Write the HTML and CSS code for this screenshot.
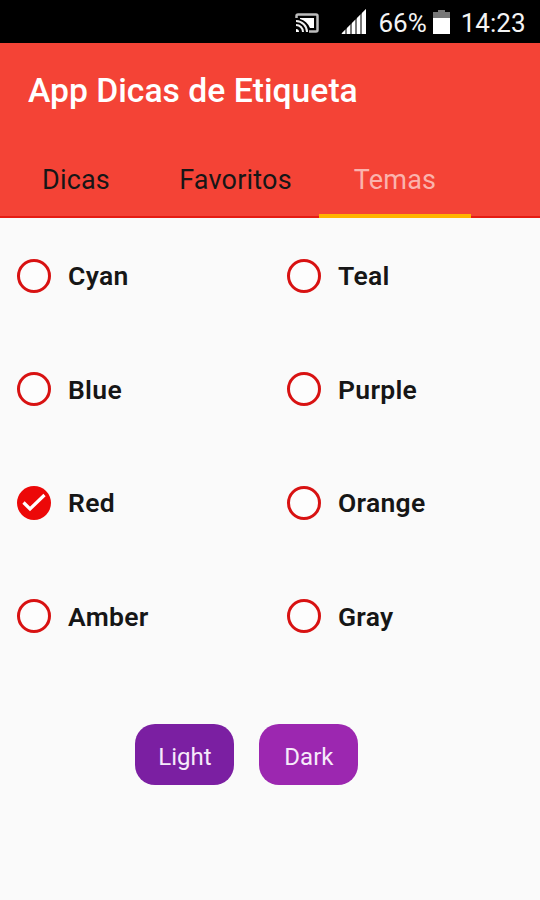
FILE: index.html
```html
<!DOCTYPE html>
<html lang="pt-BR">
<head>
<meta charset="utf-8">
<title>App Dicas de Etiqueta</title>
<link rel="stylesheet" href="styles.css">
</head>
<body>
<div class="status">
  <svg class="cast" width="24" height="20" viewBox="0 0 24 20" fill="none" stroke="#bdbdbd" stroke-width="2.500"><path d="M1.500 5V3q0-1.500 1.500-1.500h18q1.500 0 1.500 1.500v14q0 1.500-1.500 1.500h-7"/><path d="M5 5h14v10h-4Q12 8 5 6z" fill="#fff" stroke="none"/><path d="M1 8a11 11 0 0 1 11 11M1 12a7 7 0 0 1 7 7" stroke="#eee" stroke-width="2"/><path d="M1 16a3 3 0 0 1 3 3H1z" fill="#fff" stroke="none"/></svg>
  <svg class="signal" width="25" height="25" viewBox="0 0 25 25"><path d="M0 25L25 0v25z" fill="#777"/><path d="M1 24l3-3v4H1zM6 19l3-3v9H6zM11 14l3-3v14h-3zM16 9l3-3v19h-3zM21 4l4-4v25h-4z" fill="#fff"/></svg>
  <span class="percent">66%</span>
  <svg class="battery" width="17" height="24" viewBox="0 0 17 24"><path d="M5 0h7v2h5v6H0V2h5z" fill="#777"/><path d="M0 8h17v16H0z" fill="#fff"/></svg>
  <span class="clock">14:23</span>
</div>
<header class="header">
  <h1 class="title">App Dicas de Etiqueta</h1>
  <nav class="tabs"><span class="tab dicas">Dicas</span><span class="tab favoritos">Favoritos</span><span class="tab active">Temas</span></nav>
</header>
<main>
  <div class="themes">
    <label class="theme"><i class="radio"></i><span>Cyan</span></label>
    <label class="theme"><i class="radio"></i><span>Teal</span></label>
    <label class="theme"><i class="radio"></i><span>Blue</span></label>
    <label class="theme"><i class="radio"></i><span>Purple</span></label>
    <label class="theme"><i class="radio checked"><svg width="34" height="34" viewBox="0 0 34 34" fill="none" stroke="#fff" stroke-width="3.200"><path d="M6.500 16.500l6.500 6.500L27.500 9"/></svg></i><span>Red</span></label>
    <label class="theme"><i class="radio"></i><span>Orange</span></label>
    <label class="theme"><i class="radio"></i><span>Amber</span></label>
    <label class="theme"><i class="radio"></i><span>Gray</span></label>
  </div>
  <div class="actions"><button class="btn light">Light</button><button class="btn dark">Dark</button></div>
</main>
</body>
</html>
```
FILE: styles.css
```css
* { box-sizing: border-box; }
body { margin: 0; height: 900px; background: #fafafa; font-family: Roboto, sans-serif; color: #161616; overflow: hidden; }
.status { height: 43px; background: #000; color: #f4f4f4; display: flex; align-items: center; justify-content: flex-end; padding: 2px 14.5px 0 0; font-size: 26px; }
.cast { margin: 0 22px 0 0; }
.signal { margin: -2px 12.5px 0 0; }
.percent { margin-right: 6px; }
.battery { margin: -2px 11px 0 0; }
.header { height: 175px; background: #f44336; border-bottom: 2px solid #e51c12; }
.title { margin: 0; padding: 28px 0 0 28px; height: 97px; font-size: 33.7px; line-height: 40px; font-weight: 500; color: #fff; }
.tabs { display: flex; height: 78px; font-size: 27px; line-height: 80px; letter-spacing: .2px; }
.tab { text-align: center; white-space: nowrap; }
.dicas { width: 152px; }
.favoritos { width: 167px; }
.active { width: 152px; color: #fbb3ad; border-bottom: 4px solid #ffb300; }
.themes { display: grid; grid-template-columns: 270px 270px; grid-auto-rows: 113.5px; padding-top: 1px; }
.theme { display: flex; align-items: center; padding-left: 17px; gap: 17px; font-size: 26.5px; letter-spacing: .3px; font-weight: 600; }
.radio { width: 34px; height: 34px; border: 3px solid #d81212; border-radius: 50%; background: #fdfdfd; }
.checked { border: 0; background: #ec0808; }
.radio svg { display: block; }
.actions { display: flex; gap: 25px; padding: 51px 0 0 135.4px; }
.btn { width: 99px; height: 61px; border: 0; border-radius: 20px; color: #f6eafa; font: 24px Roboto, sans-serif; padding: 4px 0 0; }
.light { background: #7b1fa2; }
.dark { background: #9c27b0; }
```
